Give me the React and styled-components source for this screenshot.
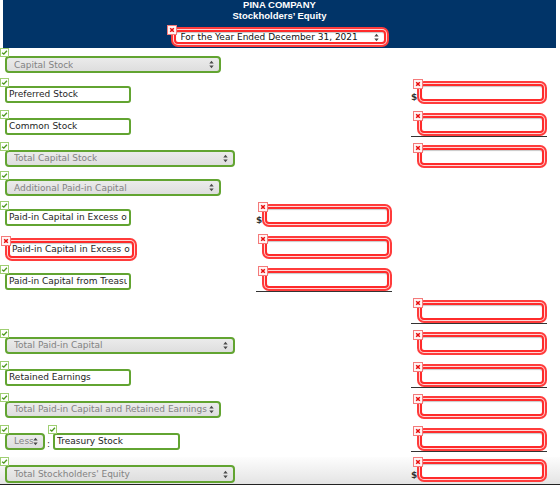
import React from 'react';
import styled, { createGlobalStyle } from 'styled-components';

const Global = createGlobalStyle`
  *, *::before, *::after { box-sizing: border-box; }
  html, body { margin: 0; padding: 0; background: #fff; }
  body {
    font-family: "DejaVu Sans", Verdana, sans-serif;
    font-size: 9px;
    color: #222;
  }
  #root { width: 560px; height: 485px; overflow: hidden; }
`;

const GREEN = '#62a431';
const RED = '#ff2b2b';

/* ---------- header ---------- */

const Header = styled.header`
  margin-left: 3px;
  width: 553px;
  height: 48px;
  background: #013468;
  display: flex;
  flex-direction: column;
  align-items: center;
  color: #fff;
`;

const Title = styled.div`
  margin-top: -1px;
  font-family: "Liberation Sans", Arial, sans-serif;
  font-weight: bold;
  font-size: 9.5px;
  line-height: 11px;
  text-align: center;
`;

/* ---------- status badges ---------- */

const BadgeSlot = styled.span`
  position: absolute;
  left: ${p => (p.$ok ? -5 : -7)}px;
  top: ${p => (p.$ok ? -8 : -5)}px;
  width: ${p => (p.$ok ? 9 : 10)}px;
  height: ${p => (p.$ok ? 9 : 10)}px;
  display: block;
  z-index: 2;
  line-height: 0;
`;

function Badge({ ok }) {
  return (
    <BadgeSlot $ok={ok}>
      {ok ? (
        <svg width="9" height="9" viewBox="0 0 9 9">
          <rect x="0.5" y="0.5" width="8" height="8" fill="#fff" stroke="#9fcf72" />
          <path d="M2.1 4.7 L3.8 6.1 L6.9 2.7" stroke="#4e9a20" strokeWidth="1.4" fill="none" />
        </svg>
      ) : (
        <svg width="10" height="10" viewBox="0 0 10 10">
          <rect x="0.5" y="0.5" width="9" height="9" fill="#fff4f4" stroke="#f47a7a" />
          <path d="M3.2 3.2 L6.8 6.8 M6.8 3.2 L3.2 6.8" stroke="#e80c0c" strokeWidth="1.5" fill="none" />
        </svg>
      )}
    </BadgeSlot>
  );
}

const Field = styled.span`
  position: relative;
  display: inline-flex;
  margin: ${p => (p.$ring ? '3px' : '0')};
`;

/* ---------- controls ---------- */

const ringStyle = `
  border-color: ${RED};
  box-shadow: 0 0 0 1px #ffd6d6, 0 0 0 3px #ff3b3b, inset 0 1px 1px #c8c8c8;
  border-radius: 4px;
`;

const TextBox = styled.input`
  width: ${p => p.$w}px;
  height: ${p => p.$h || 17}px;
  margin: 0;
  padding: 0 2px;
  border: 2px solid ${GREEN};
  border-radius: 3px;
  background: #fff;
  font-family: "DejaVu Sans", Verdana, sans-serif;
  font-size: 9px;
  color: #1e1e1e;
  outline: none;
  ${p => (p.$bad ? ringStyle : '')}
`;

const Drop = styled.div`
  width: ${p => p.$w}px;
  height: ${p => p.$h || 17}px;
  display: flex;
  align-items: center;
  justify-content: space-between;
  padding: 0 5px 0 7px;
  border: 2px solid ${GREEN};
  border-radius: 4px;
  background: linear-gradient(#ebebeb, #dedede);
  color: #828282;
  white-space: nowrap;
  overflow: hidden;
  ${p =>
    p.$bad
      ? `${ringStyle} background: #fff; color: #111; padding-left: 5px;`
      : ''}
`;

const DropText = styled.span`
  overflow: hidden;
`;

function Arrows() {
  return (
    <svg width="5" height="9" viewBox="0 0 5 9" style={{ flex: 'none' }}>
      <path d="M0.3 3.6 L2.5 0.8 L4.7 3.6 Z M0.3 5.4 L2.5 8.2 L4.7 5.4 Z" fill="#4a4a4a" />
    </svg>
  );
}

function Select({ text, w, bad, h }) {
  return (
    <Field $ring={bad}>
      <Badge ok={!bad} />
      <Drop $w={w} $bad={bad} $h={h}>
        <DropText>{text}</DropText>
        <Arrows />
      </Drop>
    </Field>
  );
}

function Text({ value, w = 126, bad }) {
  return (
    <Field $ring={bad}>
      <Badge ok={!bad} />
      <TextBox readOnly value={value} $w={w} $bad={bad} />
    </Field>
  );
}

const HeaderSelect = styled.div`
  margin-top: 6px;
`;

/* ---------- statement grid ---------- */

const Sheet = styled.div`
  padding-top: 3px;
  display: flex;
  flex-direction: column;
`;

const Row = styled.div`
  display: grid;
  grid-template-columns: 256px 136px 19px 136px;
  align-items: ${p => (p.$last ? 'end' : 'center')};
  height: ${p => (p.$last ? 28 : p.$short ? 27 : 32)}px;
  ${p =>
    p.$last
      ? `padding-bottom: 1px; border-bottom: 1px solid #222;
         background: linear-gradient(#fdfdfd, #e4e4e4);`
      : ''}
`;

const Label = styled.div`
  grid-column: 1;
  display: flex;
  align-items: center;
  padding-left: 5px;
`;

const Colon = styled.span`
  align-self: flex-end;
  margin: 0 3px 0 2px;
  line-height: 12px;
  color: #333;
`;

const Money = styled.div`
  grid-column: ${p => p.$col};
  display: flex;
  align-items: flex-end;
  border-bottom: 1px solid ${p => (p.$rule ? '#333' : 'transparent')};
  margin-bottom: ${p => (p.$last ? 0 : 2)}px;
`;

const Dollar = styled.span`
  width: 6px;
  font-weight: bold;
  font-size: 9px;
  line-height: 9px;
  color: #333;
  margin-bottom: 2px;
`;

function Amount({ col, dollar, rule, last }) {
  return (
    <Money $col={col} $rule={rule} $last={last}>
      <Dollar>{dollar ? '$' : ''}</Dollar>
      <Field $ring>
        <Badge ok={false} />
        <TextBox readOnly value="" $w={124} $bad />
      </Field>
    </Money>
  );
}

const MID = 2;
const RIGHT = 4;

const lines = [
  { short: true, left: <Select text="Capital Stock" w={216} /> },
  { left: <Text value="Preferred Stock" />, amt: { col: RIGHT, dollar: true } },
  { left: <Text value="Common Stock" />, amt: { col: RIGHT, rule: true } },
  { left: <Select text="Total Capital Stock" w={230} />, amt: { col: RIGHT } },
  { short: true, left: <Select text="Additional Paid-in Capital" w={216} /> },
  {
    left: <Text value="Paid-in Capital in Excess of Par - Preferred Stock" />,
    amt: { col: MID, dollar: true },
  },
  {
    left: <Text value="Paid-in Capital in Excess of Par - Common Stock" bad />,
    amt: { col: MID },
  },
  {
    left: <Text value="Paid-in Capital from Treasury Stock" />,
    amt: { col: MID, rule: true },
  },
  { left: null, amt: { col: RIGHT, rule: true } },
  { left: <Select text="Total Paid-in Capital" w={230} />, amt: { col: RIGHT } },
  { left: <Text value="Retained Earnings" />, amt: { col: RIGHT, rule: true } },
  {
    left: <Select text="Total Paid-in Capital and Retained Earnings" w={216} />,
    amt: { col: RIGHT },
  },
  {
    left: (
      <>
        <Select text="Less" w={40} />
        <Colon>:</Colon>
        <Text value="Treasury Stock" w={127} />
      </>
    ),
    amt: { col: RIGHT, rule: true },
  },
  {
    last: true,
    left: <Select text="Total Stockholders' Equity" w={230} h={18} />,
    amt: { col: RIGHT, dollar: true },
  },
];

export default function App() {
  return (
    <>
      <Global />
      <Header>
        <Title>
          PINA COMPANY
          <br />
          Stockholders’ Equity
        </Title>
        <HeaderSelect>
          <Select text="For the Year Ended December 31, 2021" w={212} h={14} bad />
        </HeaderSelect>
      </Header>
      <Sheet>
        {lines.map((l, i) => (
          <Row key={i} $short={l.short} $last={l.last}>
            <Label>{l.left}</Label>
            {l.amt && <Amount {...l.amt} last={l.last} />}
          </Row>
        ))}
      </Sheet>
    </>
  );
}
